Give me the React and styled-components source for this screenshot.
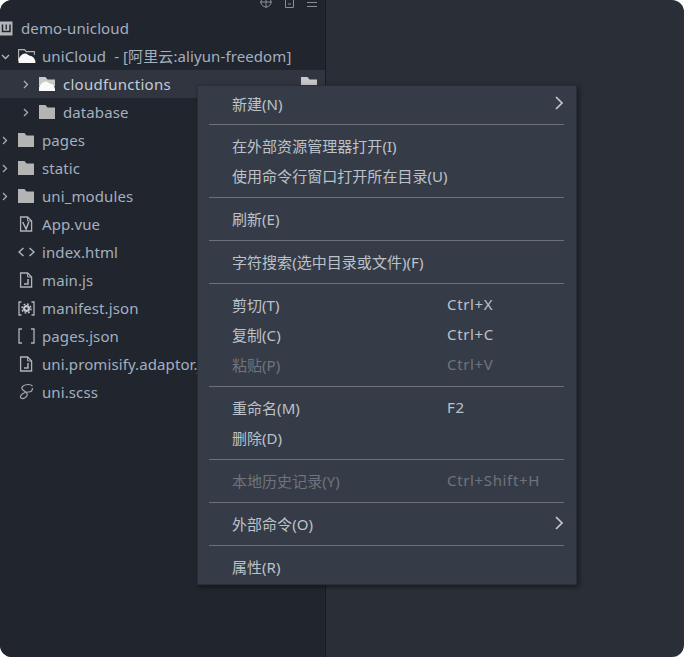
import React from 'react';
import styled, { createGlobalStyle } from 'styled-components';

const Global = createGlobalStyle`
  html, body { margin: 0; padding: 0; background: #fff; }
  #root { width: 684px; height: 657px; }
`;
const FONT = `"Noto Sans", "Noto Sans CJK SC", sans-serif`;

const Window = styled.div`
  position: relative; width: 684px; height: 657px; display: flex; overflow: hidden;
  border-radius: 12px; background: #2a2e37; font-family: ${FONT};
`;
const Sidebar = styled.aside`
  width: 325px; flex: none; background: #21252d; border-right: 1px solid #181b21;
  display: flex; flex-direction: column; overflow: hidden;
`;
const Toolbar = styled.div`
  height: 14px; flex: none; display: flex; justify-content: flex-end; align-items: flex-end;
  gap: 11px; padding-right: 7px; overflow: hidden; color: #8a8e95;
`;
const ToolIcon = styled.svg`
  flex: none; margin-bottom: ${p => p.$mb}px; fill: none; stroke: currentColor;
`;
const Row = styled.div`
  height: 28px; flex: none; display: flex; align-items: center; position: relative;
  padding-left: ${p => p.$pad}px; background: ${p => (p.$active ? '#31353f' : 'transparent')};
  font-size: 15px; letter-spacing: ${p => (p.$active ? '.25px' : '.1px')};
  color: ${p => (p.$active ? '#c3ccd8' : '#a3b0c0')};
  white-space: nowrap; overflow: hidden;
`;
const Slot = styled.span`
  width: ${p => p.$w}px; flex: none; display: flex; align-items: center; color: ${p => p.$c || '#b5b8bd'};
`;
const Trail = styled.span`
  margin-left: auto; margin-right: 7px; display: flex; color: #c8c8c8;
`;
const MixedName = styled.span`
  padding-bottom: 2px; letter-spacing: .1px;
`;
const Menu = styled.div`
  position: absolute; left: 197px; top: 85px; width: 380px; height: 500px; box-sizing: border-box;
  background: #363c47; border: 1px solid #2a2e37; padding: 3px 12px 0 11px;
  box-shadow: 2px 2px 5px rgba(0,0,0,.45); font-size: 15px; color: #bcc2ca; z-index: 2;
`;
const Item = styled.div`
  height: 30px; box-sizing: border-box; padding: 0 0 2px 23px; display: flex; align-items: center;
  white-space: nowrap; color: ${p => (p.$off ? '#6f747c' : 'inherit')}; position: relative;
`;
const Label = styled.span`width: 215px; flex: none; letter-spacing: .04px;`;
const Shortcut = styled.span`letter-spacing: .65px;`;
const Sep = styled.div`height: 1px; background: #6d7177; margin: ${p => (p.$first ? '5px' : '6px')} 0 6px;`;
const Arrow = styled.svg`position: absolute; right: 0; top: 7px; color: #c4c7cc;`;

const Chevron = ({ open }) => (
  <svg width="9" height="9" viewBox="0 0 9 9" fill="none" stroke="currentColor" strokeWidth="1.3">
    {open ? <path d="M1 3l3.500 3.500L8 3" /> : <path d="M3 1l3.500 3.500L3 8" />}
  </svg>
);
const Folder = ({ c = '#b4b4b4' }) => (
  <svg width="17" height="14" viewBox="0 0 17 14">
    <path d="M0 0h6.500l2 2.600H16V14H0z" fill={c} />
  </svg>
);
const FolderOpen = () => (
  <svg width="18" height="14" viewBox="0 0 18 14">
    <path d="M.6 12V.6h6l1.600 2h8.200V6" fill="none" stroke="#b4b4b4" strokeWidth="1.100" />
    <path d="M.6 14V10C2 7 4 4.500 7 4.500c2.500 0 3 1.800 5 2.200 2.500.4 4.500 2 5.400 5.300v2z" fill="#f8f8f8" />
  </svg>
);
const FolderLit = () => (
  <svg width="17" height="14" viewBox="0 0 17 14">
    <path d="M0 0h6.500l2 2.600H16V9H0z" fill="#c9c9c9" />
    <path d="M0 14V10C1.500 7 4 4.500 6.500 4.500c2.500 0 3 1.800 5 2.200 2.500.4 4 1.800 4.500 5.300v2z" fill="#fafafa" />
  </svg>
);
const FileShape = ({ children }) => (
  <svg width="16" height="16" viewBox="0 0 16 16" fill="none" stroke="#b0b3b8" strokeWidth="1.300">
    <path d="M2.600 1h7l4 4v10h-11z" />
    <path d="M9.600 1v4h4" strokeWidth="1" />
    {children}
  </svg>
);
const VueIcon = () => <FileShape><path d="M4.700 6l3.400 7 2.700-7" strokeWidth="1.500" /></FileShape>;
const JsIcon = () => <FileShape><path d="M10 7v5H6" strokeWidth="1.500" /></FileShape>;
const CodeIcon = () => (
  <svg width="17" height="10" viewBox="0 0 17 10" fill="none" stroke="#b0b3b8" strokeWidth="1.500">
    <path d="M5.500 1L1 5l4.500 4M11.500 1L16 5l-4.500 4" />
  </svg>
);
const GearJson = () => (
  <svg width="17" height="15" viewBox="0 0 17 15" fill="none" stroke="#b0b3b8" strokeWidth="1.300">
    <path d="M3.500 1H1v13h2.500M13.500 1H16v13h-2.500" />
    <circle cx="8.500" cy="7.500" r="2.400" strokeWidth="2.200" stroke="#c4c7cb" />
    <circle cx="8.500" cy="7.500" r="4.500" strokeWidth="1.400" strokeDasharray="1.800 1.730" stroke="#c4c7cb" />
  </svg>
);
const Brackets = () => (
  <svg width="17" height="16" viewBox="0 0 17 16" fill="none" stroke="#b0b3b8" strokeWidth="1.300">
    <path d="M4 1H1v14h3M13 1h3v14h-3" />
  </svg>
);
const ScssIcon = () => (
  <svg width="16" height="18" viewBox="0 0 16 18" fill="none" stroke="#a5a8ad" strokeWidth="1.200">
    <path d="M14.500 3C12.500.8 7 1 4.500 3.500c-2 2.200.5 4 3 5.200 2.500 1.400 2.300 4.400-.5 6-2.300 1.400-5 1-4.500-1.300.6-2.700 4.800-4.300 8-4.400 2.300 0 4-1.300 4-4" />
  </svg>
);
const ProjectIcon = () => (
  <svg width="13" height="15" viewBox="0 0 13 15">
    <rect x="0" y="0.500" width="12.500" height="14" fill="#b4b6ba" />
    <path d="M2.500 3.500v7h7.500v-7" fill="none" stroke="#21252d" strokeWidth="1.500" />
    <path d="M6.250 3.500V8.500" stroke="#21252d" strokeWidth="1.300" />
  </svg>
);

const files = [
  { name: 'pages', folder: true },
  { name: 'static', folder: true },
  { name: 'uni_modules', folder: true },
  { name: 'App.vue', icon: <VueIcon /> },
  { name: 'index.html', icon: <CodeIcon /> },
  { name: 'main.js', icon: <JsIcon /> },
  { name: 'manifest.json', icon: <GearJson /> },
  { name: 'pages.json', icon: <Brackets /> },
  { name: 'uni.promisify.adaptor.js', icon: <JsIcon /> },
  { name: 'uni.scss', icon: <ScssIcon /> },
];

const menu = [
  [{ t: '新建(N)', sub: true }],
  [{ t: '在外部资源管理器打开(I)' }, { t: '使用命令行窗口打开所在目录(U)' }],
  [{ t: '刷新(E)' }],
  [{ t: '字符搜索(选中目录或文件)(F)' }],
  [{ t: '剪切(T)', k: 'Ctrl+X' }, { t: '复制(C)', k: 'Ctrl+C' }, { t: '粘贴(P)', k: 'Ctrl+V', off: true }],
  [{ t: '重命名(M)', k: 'F2' }, { t: '删除(D)' }],
  [{ t: '本地历史记录(Y)', k: 'Ctrl+Shift+H', off: true }],
  [{ t: '外部命令(O)', sub: true }],
  [{ t: '属性(R)' }],
];

export default function App() {
  return (
    <Window>
      <Global />
      <Sidebar>
        <Toolbar>
          <ToolIcon $mb={6} width="12" height="12" viewBox="0 0 12 12">
            <circle cx="6" cy="6" r="5" /><path d="M6 0v12M0 6h12" />
          </ToolIcon>
          <ToolIcon $mb={3} width="12" height="13" viewBox="0 0 12 13">
            <path d="M2.500 0v9.500h8V0M5 6h3" />
          </ToolIcon>
          <ToolIcon $mb={2} width="12" height="12" viewBox="0 0 12 12">
            <path d="M1 2.500h10M1 6.500h10" />
          </ToolIcon>
        </Toolbar>
        <Row $pad={0}>
          <Slot $w={21}><ProjectIcon /></Slot>demo-unicloud
        </Row>
        <Row $pad={1}>
          <Slot $w={17}><Chevron open /></Slot>
          <Slot $w={24}><FolderOpen /></Slot>
          <MixedName>uniCloud&nbsp;&nbsp;- [阿里云:aliyun-freedom]</MixedName>
        </Row>
        <Row $pad={21} $active>
          <Slot $w={18} $c="#a8acb3"><Chevron /></Slot>
          <Slot $w={24}><FolderLit /></Slot>
          cloudfunctions
          <Trail><Folder c="#c8c8c8" /></Trail>
        </Row>
        <Row $pad={21}>
          <Slot $w={18} $c="#a8acb3"><Chevron /></Slot>
          <Slot $w={24}><Folder /></Slot>
          database
        </Row>
        {files.map(f =>
          f.folder ? (
            <Row key={f.name} $pad={0}>
              <Slot $w={18} $c="#a8acb3"><Chevron /></Slot>
              <Slot $w={24}><Folder /></Slot>
              {f.name}
            </Row>
          ) : (
            <Row key={f.name} $pad={18}>
              <Slot $w={24}>{f.icon}</Slot>
              {f.name}
            </Row>
          )
        )}
      </Sidebar>
      <Menu>
        {menu.map((group, i) => (
          <React.Fragment key={i}>
            {i > 0 && <Sep $first={i === 1} />}
            {group.map(it => (
              <Item key={it.t} $off={it.off}>
                <Label>{it.t}</Label>
                {it.k && <Shortcut>{it.k}</Shortcut>}
                {it.sub && (
                  <Arrow width="10" height="14" viewBox="0 0 10 14" fill="none" stroke="currentColor" strokeWidth="1.700">
                    <path d="M2 1l6 6-6 6" />
                  </Arrow>
                )}
              </Item>
            ))}
          </React.Fragment>
        ))}
      </Menu>
    </Window>
  );
}
